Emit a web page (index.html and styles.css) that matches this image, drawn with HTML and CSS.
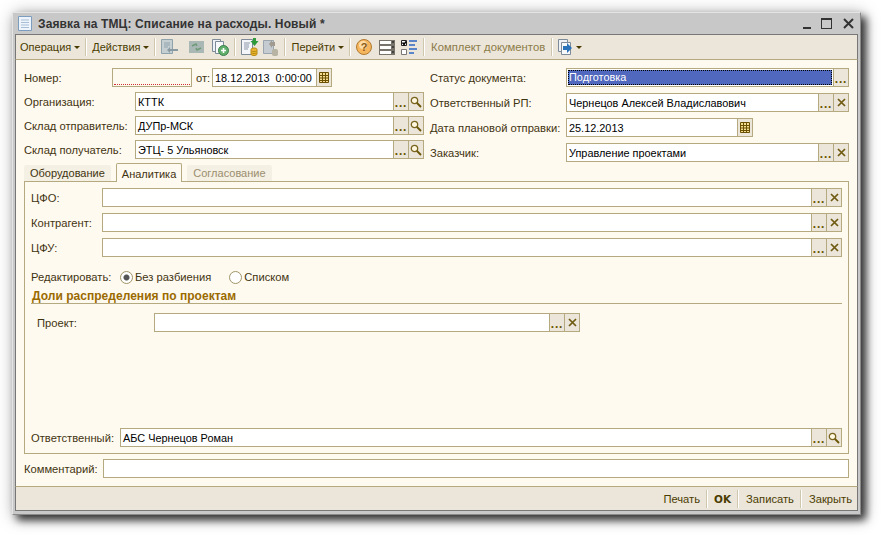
FILE: index.html
```html
<!DOCTYPE html>
<html>
<head>
    <title>Заявка на ТМЦ</title>
    <link rel="stylesheet" href="styles.css">
</head>
<body>
    <svg class="defs" width="0" height="0">
        <symbol id="i-search" viewBox="0 0 12 12"><circle cx="4.5" cy="4.5" r="3.2" fill="#fff8e0" stroke="#7a6520" stroke-width="1.3"/><path d="M7 7l4 4" stroke="#6a5500" stroke-width="1.8"/></symbol>
        <symbol id="i-x" viewBox="0 0 9 9"><path d="M1 1l7 7M8 1l-7 7" stroke="#6e5a10" stroke-width="1.7"/></symbol>
        <symbol id="i-cal" viewBox="0 0 12 13"><path d="M1.5 1.5h9v10h-9zM1.5 4.5h9M1.5 7h9M1.5 9.5h9M4.5 1.5v10M7.5 1.5v10" fill="#f4dc90" stroke="#6a5000"/></symbol>
    </svg>
    <div class="window">
        <div class="titlebar">
            <svg class="title-icon" width="14" height="15" viewBox="0 0 14 15"><path d="M.5.5h13v14H.5z" fill="#eef4fb" stroke="#7c9cc0"/><path d="M3 4h8M3 6.5h8M3 9h8M3 11.500h8" stroke="#a8bdd6"/></svg>
            <span class="title-text">Заявка на ТМЦ: Списание на расходы. Новый *</span>
            <div class="win-controls">
                <span class="win-min"></span>
                <span class="win-max"></span>
                <svg width="11" height="11" viewBox="0 0 11 11"><path d="M1 1l9 9M10 1l-9 9" stroke="#333" stroke-width="2"/></svg>
            </div>
        </div>

        <div class="toolbar">
            <span class="tb-text">Операция<i class="caret"></i></span>
            <span class="tb-sep"></span>
            <span class="tb-text">Действия<i class="caret"></i></span>
            <span class="tb-sep"></span>
            <svg class="tb-icon" width="17" height="16" viewBox="0 0 17 16"><path d="M.5.500h11v14H.5z" fill="#c5cfd2" stroke="#8fa3ad"/><path d="M3 4h6M3 6h6M3 8h4" stroke="#8fa3ad"/><path d="M17 10H9V8l-3 3 3 3v-2h8z" fill="#8a9aa3"/></svg>
            <svg class="tb-icon ml-11" width="15" height="14" viewBox="0 0 15 14"><path d="M0 1h15v12H0z" fill="#a9b8b4"/><path d="M3 6l4-2 1 2M12 8l-4 2-1-2" stroke="#6f9a78" stroke-width="1.500" fill="none"/></svg>
            <svg class="tb-icon ml-8" width="17" height="17" viewBox="0 0 17 17"><path d="M.5.500h8v12h-8z" fill="#eef2f6" stroke="#7d8b99"/><path d="M3.500 2.500h8v12h-8z" fill="#f6f8fa" stroke="#7d8b99"/><circle cx="11.500" cy="11.500" r="5" fill="#5fae6a" stroke="#3c7f4c"/><path d="M9 11.500h5M11.500 9v5" stroke="#fff" stroke-width="1.600"/></svg>
            <span class="tb-sep"></span>
            <svg class="tb-icon" width="18" height="18" viewBox="0 0 18 18"><path d="M.5 1.500h11v15H.5z" fill="#f4f6fa" stroke="#7d8b99"/><path d="M3 5h6M3 7h5M3 9h5M3 11h4" stroke="#8a97a8"/><path d="M12 0h3v3h2.500l-4 5-4-5H12z" fill="#2e9a3a"/><path d="M10 11.500c0-1 1.500-1.500 3-1.500s3 .5 3 1.500v4.500c0 1-1.500 1.500-3 1.500s-3-.5-3-1.500z" fill="#eab52f" stroke="#b88a14"/><path d="M10.500 13c1 .7 4 .7 5 0M10.500 15c1 .7 4 .7 5 0" stroke="#b88a14" fill="none"/></svg>
            <svg class="tb-icon ml-4" width="16" height="17" viewBox="0 0 16 17"><path d="M.5 1.500h10v13H.5z" fill="#c4ccd2" stroke="#9aa5ad"/><path d="M6 5l3-4v2h3v4H9v2z" fill="#a09a90"/><path d="M9 11.500c0-1 1.500-1.500 3-1.500s3 .5 3 1.500v4c0 1-1.500 1.500-3 1.500s-3-.5-3-1.500z" fill="#b8b4a4"/></svg>
            <span class="tb-sep"></span>
            <span class="tb-text">Перейти<i class="caret"></i></span>
            <span class="tb-sep"></span>
            <svg class="tb-icon" width="16" height="16" viewBox="0 0 16 16"><circle cx="8" cy="8" r="7.500" fill="#f5b65e" stroke="#b07a30"/><circle cx="7" cy="6" r="4" fill="#fbdca8"/><text x="8" y="12" class="help-mark">?</text></svg>
            <svg class="tb-icon ml-7" width="16" height="15" viewBox="0 0 16 15"><path d="M0 0h16v15H0z" fill="#77736a"/><path d="M1 1h11v3H1zM1 6h11v3H1zM1 11h11v3H1z" fill="#fff"/><path d="M13 2h2M13 7h2M13 12h2" stroke="#111"/></svg>
            <svg class="tb-icon ml-6" width="17" height="15" viewBox="0 0 17 15"><path d="M.5.500h5v5h-5z" fill="#fff" stroke="#222"/><path d="M1.500 2.500l1.500 2 2-3" stroke="#000" fill="none" stroke-width="1.500"/><path d="M.5 9.500h5v5h-5z" fill="#fff" stroke="#777"/><path d="M8 1h8M8 5h6M8 9h8M8 13h5" stroke="#2b66c4" stroke-width="1.600"/></svg>
            <span class="tb-sep"></span>
            <span class="tb-text tb-disabled">Комплект документов</span>
            <span class="tb-sep"></span>
            <svg class="tb-icon" width="15" height="16" viewBox="0 0 15 16"><path d="M.5.500h9v12h-9z" fill="#eef2f6" stroke="#7d8b99"/><path d="M3.500 3.500h9v12h-9z" fill="#f6f8fa" stroke="#7d8b99"/><path d="M5 7h4V4l5 5-5 5v-3H5z" fill="#2b73b8"/></svg>
            <i class="caret"></i>
        </div>

        <div class="content">
            <div class="head">
                <div class="col col-left">
                    <div class="row">
                        <label class="lbl w-88">Номер:</label>
                        <div class="input input-number"></div>
                        <label class="lbl lbl-ot">от:</label>
                        <div class="input input-date">18.12.2013&nbsp; 0:00:00</div>
                        <span class="btn"><svg width="12" height="13"><use href="#i-cal"/></svg></span>
                    </div>
                    <div class="row">
                        <label class="lbl w-111">Организация:</label>
                        <div class="input grow">КТТК</div>
                        <span class="btn dots">...</span>
                        <span class="btn"><svg width="12" height="12"><use href="#i-search"/></svg></span>
                    </div>
                    <div class="row">
                        <label class="lbl w-111">Склад отправитель:</label>
                        <div class="input grow">ДУПр-МСК</div>
                        <span class="btn dots">...</span>
                        <span class="btn"><svg width="12" height="12"><use href="#i-search"/></svg></span>
                    </div>
                    <div class="row">
                        <label class="lbl w-111">Склад получатель:</label>
                        <div class="input grow">ЭТЦ- 5 Ульяновск</div>
                        <span class="btn dots">...</span>
                        <span class="btn"><svg width="12" height="12"><use href="#i-search"/></svg></span>
                    </div>
                </div>
                <div class="col col-right">
                    <div class="row">
                        <label class="lbl w-136">Статус документа:</label>
                        <div class="input grow input-selected"><span>Подготовка</span></div>
                        <span class="btn dots">...</span>
                    </div>
                    <div class="row">
                        <label class="lbl w-136">Ответственный РП:</label>
                        <div class="input grow">Чернецов Алексей Владиславович</div>
                        <span class="btn dots">...</span>
                        <span class="btn"><svg width="9" height="9"><use href="#i-x"/></svg></span>
                    </div>
                    <div class="row">
                        <label class="lbl w-136">Дата плановой отправки:</label>
                        <div class="input input-plan">25.12.2013</div>
                        <span class="btn"><svg width="12" height="13"><use href="#i-cal"/></svg></span>
                    </div>
                    <div class="row">
                        <label class="lbl w-136">Заказчик:</label>
                        <div class="input grow">Управление проектами</div>
                        <span class="btn dots">...</span>
                        <span class="btn"><svg width="9" height="9"><use href="#i-x"/></svg></span>
                    </div>
                </div>
            </div>

            <div class="tabs">
                <span class="tab">Оборудование</span>
                <span class="tab tab-active">Аналитика</span>
                <span class="tab tab-disabled">Согласование</span>
            </div>

            <div class="panel">
                <div class="panel-fields">
                    <div class="row">
                        <label class="lbl w-71">ЦФО:</label>
                        <div class="input grow"></div>
                        <span class="btn dots">...</span>
                        <span class="btn"><svg width="9" height="9"><use href="#i-x"/></svg></span>
                    </div>
                    <div class="row">
                        <label class="lbl w-71">Контрагент:</label>
                        <div class="input grow"></div>
                        <span class="btn dots">...</span>
                        <span class="btn"><svg width="9" height="9"><use href="#i-x"/></svg></span>
                    </div>
                    <div class="row">
                        <label class="lbl w-71">ЦФУ:</label>
                        <div class="input grow"></div>
                        <span class="btn dots">...</span>
                        <span class="btn"><svg width="9" height="9"><use href="#i-x"/></svg></span>
                    </div>
                </div>
                <div class="radios">
                    <span class="lbl lbl-edit">Редактировать:</span>
                    <span class="radio radio-on"></span>
                    <span class="lbl">Без разбиения</span>
                    <span class="radio radio-second"></span>
                    <span class="lbl">Списком</span>
                </div>
                <div class="section-title">Доли распределения по проектам</div>
                <div class="row row-project">
                    <label class="lbl w-117">Проект:</label>
                    <div class="input input-project"></div>
                    <span class="btn dots">...</span>
                    <span class="btn"><svg width="9" height="9"><use href="#i-x"/></svg></span>
                </div>
                <div class="row row-owner">
                    <label class="lbl w-89">Ответственный:</label>
                    <div class="input grow">АБС Чернецов Роман</div>
                    <span class="btn dots">...</span>
                    <span class="btn"><svg width="12" height="12"><use href="#i-search"/></svg></span>
                </div>
            </div>

            <div class="row row-comment">
                <label class="lbl w-79">Комментарий:</label>
                <div class="input grow"></div>
            </div>
        </div>

        <div class="statusbar">
            <span class="sb-item">Печать</span>
            <span class="tb-sep"></span>
            <span class="sb-item sb-ok">OK</span>
            <span class="tb-sep"></span>
            <span class="sb-item">Записать</span>
            <span class="tb-sep"></span>
            <span class="sb-item">Закрыть</span>
        </div>
    </div>
</body>
</html>
```

FILE: styles.css
```css
* {
    box-sizing: border-box;
}

html {
    height: 100%;
}

body {
    min-height: 100%;
    margin: 0;
    padding: 12px 0 0 12px;
    background: #fff;
    font-family: "Liberation Sans", Arial, sans-serif;
    font-size: 11.2px;
    color: #000;
}

.defs {
    display: block;
    height: 0;
}

.window {
    display: flex;
    flex-direction: column;
    width: 849px;
    height: 503px;
    padding: 0 2px 3px 2px;
    background: #c8c8c8;
    border: 1px solid #e4e4e4;
    border-right-color: #8a8a8a;
    border-bottom-color: #8a8a8a;
    box-shadow: 5px 5px 8px rgba(0, 0, 0, 0.75), 2px 2px 16px rgba(0, 0, 0, 0.35);
}

.titlebar {
    display: flex;
    align-items: center;
    height: 21px;
    padding-left: 3px;
    flex: none;
}

.title-icon {
    margin-right: 6px;
}

.title-text {
    font-size: 12px;
    font-weight: bold;
    letter-spacing: 0.12px;
    color: #333;
    white-space: nowrap;
}

.win-controls {
    display: flex;
    align-items: center;
    gap: 10px;
    margin-left: auto;
    margin-right: 4px;
}

.win-min {
    width: 8px;
    height: 2px;
    margin-top: 9px;
    background: #333;
}

.win-max {
    width: 11px;
    height: 11px;
    margin-right: 1px;
    border: 1px solid #333;
    border-top-width: 2px;
}

.toolbar {
    display: flex;
    align-items: center;
    flex: none;
    height: 26px;
    padding-left: 4px;
    font-size: 11px;
    background: #ebe5da;
    border: 1px solid #777;
    border-bottom-color: #b4a97f;
}

.tb-text {
    display: inline-flex;
    align-items: center;
    color: #4a3c00;
    white-space: nowrap;
}

.tb-disabled {
    margin: 0 1px;
    font-size: 11.3px;
    color: #8c7c48;
}

.caret {
    display: inline-block;
    width: 0;
    height: 0;
    margin-left: 3px;
    border: 3px solid transparent;
    border-top: 3px solid #4a3c00;
    border-bottom: 0;
}

.tb-sep {
    width: 2px;
    height: 18px;
    margin: 0 5px;
    border-left: 1px solid #cfc6ae;
    border-right: 1px solid #fff;
    flex: none;
}

.tb-icon {
    flex: none;
}

.ml-4 { margin-left: 4px; }
.ml-6 { margin-left: 6px; }
.ml-7 { margin-left: 7px; }
.ml-8 { margin-left: 8px; }
.ml-11 { margin-left: 11px; }

.help-mark {
    font-size: 11px;
    font-weight: bold;
    fill: #8a5a14;
    text-anchor: middle;
}

.content {
    flex: 1;
    display: flex;
    flex-direction: column;
    padding: 8px 8px 0 8px;
    background: #fffaf0;
    border-left: 1px solid #777;
    border-right: 1px solid #777;
}

.head {
    display: flex;
    gap: 6px;
}

.col {
    display: flex;
    flex-direction: column;
}

.col-left {
    width: 400px;
    gap: 5px;
}

.col-right {
    flex: 1;
    gap: 6px;
}

.row {
    display: flex;
    align-items: stretch;
    height: 19px;
    flex: none;
}

.lbl {
    display: flex;
    align-items: center;
    flex: none;
    color: #3f3410;
    white-space: nowrap;
}

.w-71 { width: 71px; }
.w-79 { width: 79px; }
.w-88 { width: 88px; }
.w-89 { width: 89px; }
.w-111 { width: 111px; }
.w-117 { width: 117px; }
.w-136 { width: 136px; }

.lbl-ot {
    width: 20px;
    padding-left: 4px;
}

.lbl-edit {
    width: 82px;
}

.input {
    display: flex;
    align-items: center;
    padding-left: 2px;
    font-size: 10.9px;
    background: #fff;
    border: 1px solid #b4a97f;
    white-space: nowrap;
    overflow: hidden;
    min-width: 0;
}

.grow {
    flex: 1;
}

.input-number {
    width: 80px;
    background: #fffaf0;
    position: relative;
}

.input-number::after {
    content: "";
    position: absolute;
    left: 1px;
    right: 1px;
    bottom: 1px;
    border-bottom: 1px dotted #d03030;
}

.input-date {
    width: 105px;
}

.input-plan {
    width: 172px;
}

.input-project {
    width: 396px;
}

.input-selected {
    padding: 1px;
}

.input-selected span {
    flex: 1;
    height: 100%;
    padding-left: 1px;
    line-height: 15px;
    color: #fff;
    background: #5068bd;
    outline: 1px dotted #000;
    outline-offset: -1px;
}

.btn {
    display: flex;
    align-items: center;
    justify-content: center;
    flex: none;
    width: 16px;
    margin-left: -1px;
    background: #ebe5da;
    border: 1px solid #b4a97f;
}

.dots {
    align-items: flex-end;
    padding-bottom: 1px;
    font-size: 12px;
    font-weight: bold;
    letter-spacing: 0.8px;
    line-height: 12px;
    color: #6a5500;
}

.tabs {
    display: flex;
    align-items: flex-end;
    gap: 5px;
    height: 19px;
    flex: none;
    font-size: 11px;
}

.tab {
    height: 16px;
    padding: 0 6px;
    line-height: 16px;
    background: #f5f0e4;
    border-radius: 2px 2px 0 0;
    color: #3f3410;
    white-space: nowrap;
}

.tab-active {
    position: relative;
    height: 19px;
    padding: 0 5px;
    line-height: 20px;
    margin-bottom: -1px;
    background: #fffaf0;
    border: 1px solid #b4a97f;
    border-bottom: 0;
}

.tab-disabled {
    color: #9a8e6e;
}

.panel {
    display: flex;
    flex-direction: column;
    flex: none;
    height: 273px;
    padding: 6px 6px 0 6px;
    border: 1px solid #b4a97f;
}

.panel-fields {
    display: flex;
    flex-direction: column;
    gap: 6px;
}

.radios {
    display: flex;
    align-items: center;
    height: 14px;
    margin-top: 13px;
}

.radio {
    width: 13px;
    height: 13px;
    margin: 0 2px 0 7px;
    background: #fff;
    border: 1px solid #a09468;
    border-radius: 50%;
    flex: none;
}

.radio-on {
    background: radial-gradient(circle, #555 0 2.5px, #fff 3.5px);
}

.radio-second {
    margin-left: 18px;
}

.section-title {
    margin-top: 6px;
    padding: 0 0 1px 1px;
    height: 14px;
    font-size: 12px;
    letter-spacing: 0.03px;
    line-height: 13px;
    font-weight: bold;
    color: #9a6a00;
    border-bottom: 1px solid #b4a97f;
}

.row-project {
    margin-top: 9px;
    padding-left: 6px;
}

.row-owner {
    margin-top: 96px;
}

.row-comment {
    margin-top: 5px;
}

.statusbar {
    display: flex;
    align-items: center;
    justify-content: flex-end;
    flex: none;
    height: 25px;
    padding-right: 5px;
    background: #ebe5da;
    border: 1px solid #777;
    border-top-color: #b4a97f;
}

.statusbar .tb-sep {
    margin: 0 7px 0 6px;
}

.sb-item {
    color: #4a3c00;
}

.sb-ok {
    margin-left: -1px;
    font-family: "DejaVu Sans", sans-serif;
    font-size: 10.500px;
    font-weight: bold;
}
```
